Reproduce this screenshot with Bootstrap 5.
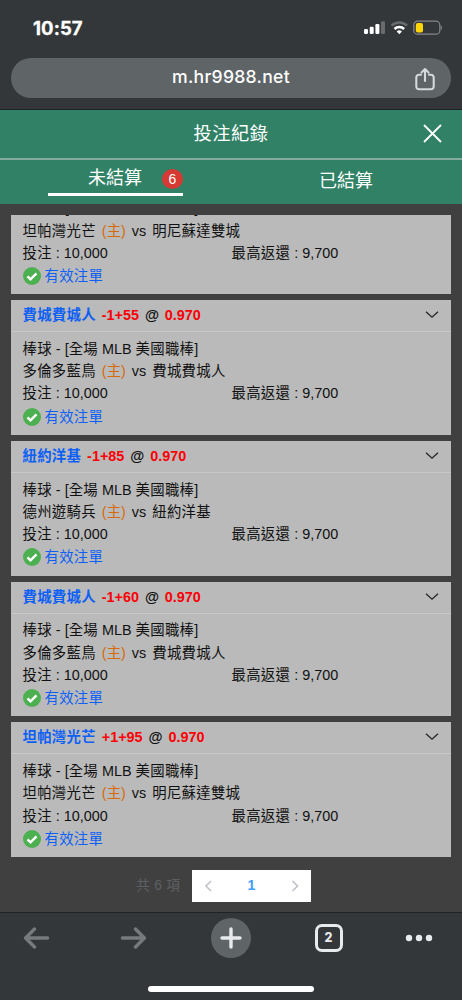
<!DOCTYPE html>
<html lang="zh-Hant">
<head>
<meta charset="utf-8">
<meta name="viewport" content="width=device-width, initial-scale=1">
<title>投注紀錄</title>
<link href="https://cdn.jsdelivr.net/npm/bootstrap@5.3.0/dist/css/bootstrap.min.css" rel="stylesheet">
<style>
body{width:462px;height:1000px;overflow:hidden;background:#404040;font-family:"Liberation Sans","Noto Sans CJK TC",sans-serif;font-size:14.4px;line-height:22.2px;color:#111}
svg{display:block;flex:none}
.chrome-top{height:110px;background:#33373a;border-bottom:1px solid #202326}
.status{height:58px;padding:0 20px 2px 33px}
.clock{font:700 18.5px/1 Inter,sans-serif;color:#fff;letter-spacing:.1px;-webkit-text-stroke:.3px #fff}
.address{height:40px;margin:0 11px;padding-bottom:2px;background:#5f6467;color:#fff;font:500 17.6px/1 Inter,sans-serif;letter-spacing:.28px;position:relative}
.share{position:absolute;right:16px;top:9px}
.title-bar{height:48px;background:#308165;color:#fff;font-size:18.3px;letter-spacing:.5px}
.close-x{position:absolute;right:20px;top:14px}
.tabs{height:46px;border-top:2px solid #83ab9b;background:#308165;color:#fff;font-size:18px}
.tab-on{width:135px;height:35.5px;border-bottom:3.5px solid #fff;padding-left:40px;line-height:36px;position:relative}
.count{position:absolute;left:114px;top:8.5px;width:21px;height:20px;border-radius:50%;background:#d63a33;font-size:14px;line-height:20px}
.tab-off{line-height:42px;padding-right:1px}
.feed{height:642px;margin:11px 11px 0}
.bet{height:134.7px;flex:none;margin-top:6px;background:#bababa;word-spacing:0}
.bet-scrolled{height:102.7px}
.bet-head{height:32px;border-bottom:1.5px solid #c9c9c9;padding:0 12px 1px 11.5px;font-weight:700;word-spacing:1.9px}
.bet-body{padding:5.8px 11.5px 0}
.versus{word-spacing:2px}
.han{letter-spacing:.28px}
.blue{color:#0d60f5}.red{color:#fb0004}.home{color:#d66a0b}
.stake{width:209px}
.valid{margin-top:1px}
.pager-area{height:55px;padding:2px 0 0 136px;color:#5d6065;font-size:13.8px}
.total{width:56px;letter-spacing:.3px;padding-top:1px}
.pager{width:119px;height:32px;background:#fff;color:#409eff;font-weight:700;font-size:14px}
.toolbar{height:88px;background:#33373a;border-top:1px solid #202326;position:relative}
.homebar{position:absolute;left:148px;top:72.5px;width:166px;height:6px;border-radius:3px;background:#fff}
.tools{display:grid;grid-template-columns:72px 123px 72px 123px 57px;height:49px;align-items:center;justify-items:center}
.plus{width:40px;height:40px;background:#5f6467}
.tabcount{width:28px;height:28px;border:3px solid #e8eaed;border-radius:7px;color:#e8eaed;font:800 12.5px/22px Inter,sans-serif}
</style>
<script src="https://cdn.jsdelivr.net/npm/bootstrap@5.3.0/dist/js/bootstrap.bundle.min.js"></script>
</head>
<body>
<header class="chrome-top">
  <div class="status d-flex align-items-center">
    <span class="clock">10:57</span>
    <svg class="ms-auto" width="79" height="16" viewBox="0 0 79 16">
      <g fill="#fff"><rect x="1" y="9" width="4" height="5" rx="1.2"/><rect x="6.7" y="6.7" width="4" height="7.3" rx="1.2"/><rect x="12.4" y="4" width="4" height="10" rx="1.2"/></g>
      <rect x="18" y="1.2" width="4" height="12.8" rx="1.2" fill="#696b6c"/>
      <g fill="none" stroke-width="2.6"><path d="M28.5 5.6a11.2 11.2 0 0 1 15.6 0" stroke="#696b6c"/><path d="M31.5 9a6.9 6.9 0 0 1 9.6 0" stroke="#fff"/></g>
      <path d="M33.7 11.4a3.8 3.8 0 0 1 5.2 0L36.3 14.3z" fill="#fff"/>
      <rect x="50.8" y="1.2" width="26" height="13" rx="3.8" fill="none" stroke="#858788" stroke-width="1.2"/><path d="M78 5.8v3.8q1.4-1.9 0-3.8z" fill="#858788" stroke="#858788" stroke-width=".6"/>
      <rect x="52.8" y="3" width="7.2" height="9.5" rx="2" fill="#ffd60a"/>
    </svg>
  </div>
  <div class="address rounded-pill d-flex align-items-center justify-content-center"><span>m.hr9988.net</span>
    <svg class="share" width="20" height="24" viewBox="0 0 20 24" fill="none" stroke="#d5d8dc" stroke-width="2.1" stroke-linecap="round" stroke-linejoin="round"><path d="M6 7.8H4A2.7 2.7 0 0 0 1.3 10.5v9A2.7 2.7 0 0 0 4 22.2h12a2.7 2.7 0 0 0 2.7-2.7v-9A2.7 2.7 0 0 0 16 7.8h-2M10 14V2.2M6.5 5.4 10 2l3.5 3.4"/></svg>
  </div>
</header>
<div class="title-bar d-flex align-items-center justify-content-center position-relative"><span>投注紀錄</span>
  <svg class="close-x" width="19" height="19" viewBox="0 0 19 19" stroke="#fff" stroke-width="1.8"><path d="M1 1 18 18M18 1 1 18"/></svg>
</div>
<div class="tabs d-flex">
  <div class="w-50 ps-5"><div class="tab-on">未結算<span class="count text-center">6</span></div></div>
  <div class="w-50 text-center tab-off">已結算</div>
</div>
<main class="feed overflow-hidden d-flex flex-column justify-content-end" id="feed"></main>
<div class="pager-area d-flex align-items-center">
  <span class="total">共 6 項</span>
  <div class="pager d-flex align-items-center justify-content-between px-2">
    <svg width="14" height="14" viewBox="0 0 14 14" fill="none" stroke="#bfc3ca" stroke-width="1.7"><path d="M11 2 6 7l5 5"/></svg><span>1</span><svg width="14" height="14" viewBox="0 0 14 14" fill="none" stroke="#bfc3ca" stroke-width="1.7"><path d="m3.5 2 5 5-5 5"/></svg>
  </div>
</div>
<footer class="toolbar">
  <div class="tools">
    <svg width="27" height="22" viewBox="0 0 27 22" fill="none" stroke="#777a7c" stroke-width="3.4" stroke-linecap="round" stroke-linejoin="round"><path d="M24.6 11H3M11.5 2 2.6 11l8.9 9"/></svg>
    <svg width="27" height="22" viewBox="0 0 27 22" fill="none" stroke="#777a7c" stroke-width="3.4" stroke-linecap="round" stroke-linejoin="round"><path d="M2.4 11H24M15.5 2l8.9 9-8.9 9"/></svg>
    <div class="plus rounded-circle d-flex align-items-center justify-content-center"><svg width="22" height="22" viewBox="0 0 22 22" stroke="#e8eaed" stroke-width="3.4" stroke-linecap="round"><path d="M11 2v18M2 11h18"/></svg></div>
    <div class="tabcount text-center">2</div>
    <svg width="28" height="8" viewBox="0 0 28 8" fill="#e8eaed"><circle cx="4" cy="4" r="3.2"/><circle cx="14" cy="4" r="3.2"/><circle cx="24" cy="4" r="3.2"/></svg>
  </div>
  <div class="homebar"></div>
</footer>
<script>
const bets = [
  ["", "", "坦帕灣光芒", "明尼蘇達雙城"],
  ["費城費城人", "-1+55", "多倫多藍鳥", "費城費城人"],
  ["紐約洋基", "-1+85", "德州遊騎兵", "紐約洋基"],
  ["費城費城人", "-1+60", "多倫多藍鳥", "費城費城人"],
  ["坦帕灣光芒", "+1+95", "坦帕灣光芒", "明尼蘇達雙城"]
];
// The first bet has its heading scrolled out of view, so only its body is built.
document.getElementById("feed").innerHTML = bets.map(([pick, line, home, away]) => `
  <article class="bet ${pick ? "" : "bet-scrolled"}">
    ${pick ? `<div class="bet-head d-flex align-items-center">
      <div><span class="blue han">${pick}</span> <span class="red">${line}</span> @ <span class="red">0.970</span></div>
      <svg class="ms-auto" width="14" height="8" viewBox="0 0 14 8" fill="none" stroke="#222" stroke-width="1.2"><path d="m1 .7 6 5.6L13 .7"/></svg>
    </div>` : ""}
    <div class="bet-body">
      <div><span class="han">棒球</span> - [<span class="han">全場</span> MLB <span class="han">美國職棒</span>]</div>
      <div class="versus"><span class="han">${home}</span> <span class="home">(主)</span> vs <span class="han">${away}</span></div>
      <div class="d-flex"><span class="stake"><span class="han">投注</span> : 10,000</span><span><span class="han">最高返還</span> : 9,700</span></div>
      <div class="valid d-flex align-items-center">
        <svg width="18" height="18" viewBox="0 0 18 18"><circle cx="9" cy="9" r="9" fill="#4caf50"/><path d="m4.5 9.3 3 3 6-6" fill="none" stroke="#fff" stroke-width="2.5"/></svg>
        <span class="blue han ms-1">有效注單</span>
      </div>
    </div>
  </article>`).join("");
</script>
</body>
</html>
